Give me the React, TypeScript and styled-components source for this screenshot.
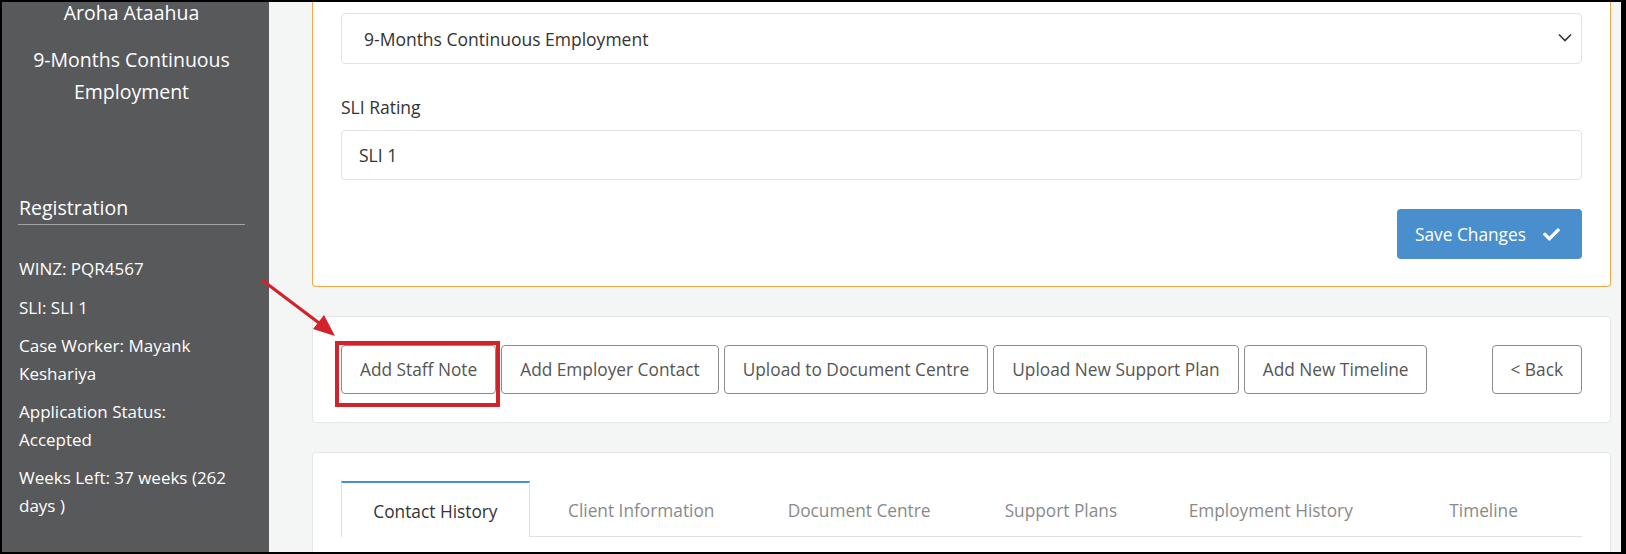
import React from "react";
import styled, { createGlobalStyle } from "styled-components";
import { FaCheck } from "react-icons/fa";

const Global = createGlobalStyle`
  html, body { margin: 0; padding: 0; background: #fff; }
  * { box-sizing: border-box; }
  body { font-family: "Open Sans", "Liberation Sans", sans-serif; }
`;

const Frame = styled.div`
  position: relative;
  width: 1626px;
  height: 554px;
  border: 2px solid #000;
  border-right-width: 5px;
  display: flex;
  overflow: hidden;
  background: #f4f5f5;
`;

const Sidebar = styled.aside`
  width: 267px;
  flex: none;
  background: #58595b;
  color: #fff;
  padding: 0 24px 0 16px;
  display: flex;
  flex-direction: column;
`;

const ClientName = styled.div`
  font-size: 19.5px;
  line-height: 28px;
  text-align: center;
  margin-top: -3px;
`;

const Programme = styled.div`
  font-size: 19.5px;
  line-height: 32px;
  text-align: center;
  margin-top: 17px;
`;

const SectionTitle = styled.div`
  font-size: 19.5px;
  line-height: 28px;
  margin-top: 86px;
  padding: 0 1px 2px;
  border-bottom: 1px solid #a3a3a3;
`;

const InfoList = styled.div`
  margin-top: 30px;
  display: flex;
  flex-direction: column;
  gap: 11px;
`;

const Info = styled.div`
  font-size: 17px;
  line-height: 27.5px;
  padding-left: 1px;
  max-width: 216px;
`;

const Main = styled.main`
  flex: 1;
  padding: 0 10px 0 43px;
  display: flex;
  flex-direction: column;
  gap: 29px;
`;

const Card = styled.section<{ $accent?: boolean; $cutTop?: boolean }>`
  background: #fff;
  border: 1px solid ${(p) => (p.$accent ? "#f3a94a" : "#e4e6e6")};
  border-top-width: ${(p) => (p.$cutTop ? 0 : 1)}px;
  border-radius: ${(p) => (p.$cutTop ? "0 0 4px 4px" : "4px")};
  padding: ${(p) => (p.$cutTop ? "11px 28px 27px" : "28px")};
`;

const Field = styled.div`
  position: relative;
  height: 51px;
  border: 1px solid #e3e3e3;
  border-radius: 4px;
  display: flex;
  align-items: center;
  padding: 0 22px;
  font-size: 17.5px;
  color: #333;
`;

const Chevron = styled.svg`
  position: absolute;
  right: 9px;
  top: 19px;
`;

const Label = styled.div`
  font-size: 17.5px;
  color: #333;
  margin: 31px 0 11px;
`;

const InputBox = styled.div`
  height: 50px;
  border: 1px solid #e3e3e3;
  border-radius: 4px;
  display: flex;
  align-items: center;
  padding: 0 17px;
  font-size: 17.5px;
  color: #333;
`;

const ActionsRight = styled.div`
  display: flex;
  justify-content: flex-end;
  margin-top: 29px;
`;

const PrimaryButton = styled.button`
  height: 50px;
  width: 185px;
  border: none;
  border-radius: 4px;
  background: #4a8fcd;
  color: #fff;
  font-family: inherit;
  font-size: 17.3px;
  display: flex;
  align-items: center;
  gap: 17px;
  padding: 0 18px;
`;

const Toolbar = styled.div`
  display: flex;
  align-items: center;
  gap: 5px;
`;

const OutlineButton = styled.button<{ $highlight?: boolean; $push?: boolean }>`
  position: relative;
  height: 49px;
  padding: 0 18px;
  background: #fff;
  border: 1px solid #8c8c8c;
  border-radius: 4px;
  color: #555;
  font-family: inherit;
  font-size: 17.3px;
  white-space: nowrap;
  margin-left: ${(p) => (p.$push ? "auto" : "0")};
  &::after {
    content: "";
    display: ${(p) => (p.$highlight ? "block" : "none")};
    position: absolute;
    left: -7px;
    right: -5px;
    top: -5px;
    bottom: -14px;
    border: 4px solid #d2232a;
  }
`;

const TabCard = styled(Card)`
  flex: 1;
`;

const Tabs = styled.div`
  display: grid;
  grid-template-columns: 189fr 223fr 213fr 191fr 229fr 197fr;
  border-bottom: 1px solid #e1e1e1;
  height: 56px;
`;

const Tab = styled.div<{ $active?: boolean }>`
  display: flex;
  align-items: center;
  justify-content: center;
  font-size: 17.3px;
  color: ${(p) => (p.$active ? "#333" : "#8a8a8a")};
  background: #fff;
  border: 1px solid ${(p) => (p.$active ? "#e1e1e1" : "transparent")};
  border-top: ${(p) => (p.$active ? "2px solid #4a8fcd" : "2px solid transparent")};
  border-bottom: none;
  margin-bottom: ${(p) => (p.$active ? "-1px" : "0")};
  padding-top: 2px;
`;

const Arrow = styled.svg`
  position: absolute;
  left: 253px;
  top: 270px;
`;

const tabs = [
  "Contact History",
  "Client Information",
  "Document Centre",
  "Support Plans",
  "Employment History",
  "Timeline",
];

export default function App() {
  return (
    <>
      <Global />
      <Frame>
        <Sidebar>
          <ClientName>Aroha Ataahua</ClientName>
          <Programme>
            9-Months Continuous
            <br />
            Employment
          </Programme>
          <SectionTitle>Registration</SectionTitle>
          <InfoList>
            <Info>WINZ: PQR4567</Info>
            <Info>SLI: SLI 1</Info>
            <Info>Case Worker: Mayank Keshariya</Info>
            <Info>Application Status: Accepted</Info>
            <Info>Weeks Left: 37 weeks (262 days )</Info>
          </InfoList>
        </Sidebar>
        <Main>
          <Card $accent $cutTop>
            <Field>
              9-Months Continuous Employment
              <Chevron width="14" height="9" viewBox="0 0 14 9">
                <polyline points="1,1.5 7,7.5 13,1.5" fill="none" stroke="#333" strokeWidth="1.6" />
              </Chevron>
            </Field>
            <Label>SLI Rating</Label>
            <InputBox>SLI 1</InputBox>
            <ActionsRight>
              <PrimaryButton>
                Save Changes
                <FaCheck size={17} />
              </PrimaryButton>
            </ActionsRight>
          </Card>
          <Card>
            <Toolbar>
              <OutlineButton $highlight>Add Staff Note</OutlineButton>
              <OutlineButton>Add Employer Contact</OutlineButton>
              <OutlineButton>Upload to Document Centre</OutlineButton>
              <OutlineButton>Upload New Support Plan</OutlineButton>
              <OutlineButton>Add New Timeline</OutlineButton>
              <OutlineButton $push>&lt; Back</OutlineButton>
            </Toolbar>
          </Card>
          <TabCard>
            <Tabs>
              {tabs.map((t, i) => (
                <Tab key={t} $active={i === 0}>
                  {t}
                </Tab>
              ))}
            </Tabs>
          </TabCard>
        </Main>
        <Arrow width="90" height="72" viewBox="0 0 90 72">
          <line x1="7" y1="8" x2="68" y2="54" stroke="#d2232a" strokeWidth="3.2" />
          <polygon points="80,64 58,57 69,43" fill="#d2232a" />
        </Arrow>
      </Frame>
    </>
  );
}
